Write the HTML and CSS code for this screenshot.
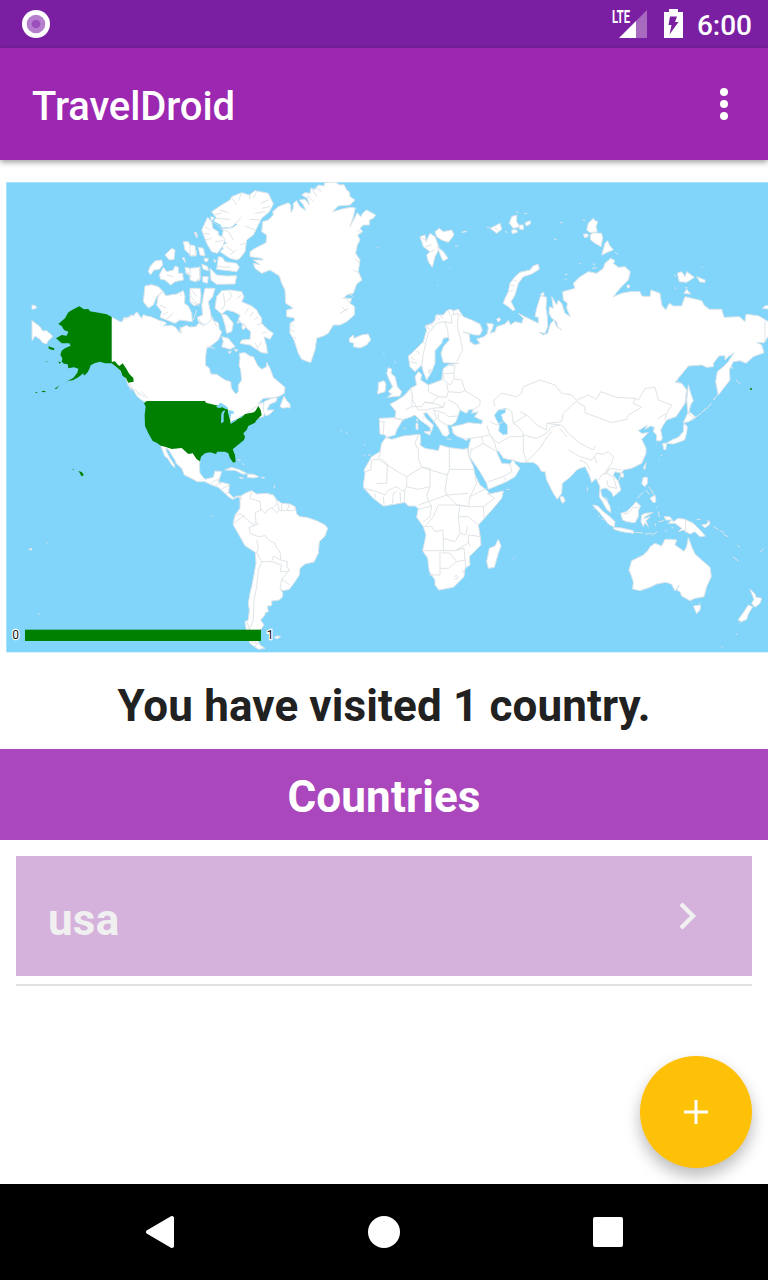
FILE: index.html
```html
<!DOCTYPE html>
<html lang="en">
<head>
<meta charset="utf-8">
<title>TravelDroid</title>
<link rel="stylesheet" href="styles.css">
</head>
<body>
<div class="screen">
  <div class="status">
    <svg class="status-dot" width="28" height="28" viewBox="0 0 28 28"><circle cx="14" cy="14" r="14" fill="#fff"/><circle cx="14" cy="14" r="9.3" fill="#b57fce"/><circle cx="14" cy="14" r="4.3" fill="#9c4fbb"/></svg>
    <div class="status-right">
      <svg width="36" height="32" viewBox="0 0 36 32"><path d="M35 2V30H24V13Z" fill="#a76abf"/><path d="M24 13V30H7Z" fill="#fff"/><text class="lte" x="0" y="14.500" textLength="18" lengthAdjust="spacingAndGlyphs">LTE</text></svg>
      <svg class="battery" width="19" height="29" viewBox="0 0 19 29"><path d="M5 0H14V3H19V29H0V3H5Z" fill="#fff"/><path d="M6 7.5H13L11 13H14.500L5.500 25.500L7.500 16H4.500Z" fill="#7b1fa2"/></svg>
      <span class="clock">6:00</span>
    </div>
  </div>
  <header class="appbar">
    <h1 class="title">TravelDroid</h1>
    <svg width="8" height="32" viewBox="0 0 8 32" fill="#fff"><circle cx="4" cy="4" r="4"/><circle cx="4" cy="16" r="4"/><circle cx="4" cy="28" r="4"/></svg>
  </header>
  <main class="content">
    <svg class="map" width="768" height="471" viewBox="0 546 2304 1413">
      <rect x="19" y="547" width="2290" height="1410" fill="#81d4fa"/>
      <g class="land">
        <!-- North America -->
        <g transform="translate(0 540)">
          <path d="M96 422L120 440 128 453 140 452 158 468 150 478 143 484 140 492 128 488 120 478 105 468 96 482ZM96 375L106 377 110 383 100 388 96 387Z"/>
          <path d="M335 411L360 425 366 426 372 412 385 413 395 405 403 407 405 400 412 397 417 405 425 415 430 404 440 408 452 410 480 422 492 425 500 430 490 438 515 436 527 442 540 460 540 445 560 436 568 441 588 440 595 430 612 435 616 415 630 410 638 412 640 422 655 428 658 448 665 455 660 470 655 480 630 500 620 505 617 530 616 555 628 565 632 582 650 583 675 600 692 605 694 625 707 642 715 635 715 615 725 600 722 570 717 555 720 535 718 520 735 518 750 528 760 530 772 555 785 568 800 560 800 547 810 565 820 592 835 605 855 622 853 640 840 648 820 653 790 655 775 670 790 668 798 690 790 710 755 720 690 740 610 730 440 665 438 668 425 660 412 650 400 630 385 618 380 600 360 570 335 548Z"/>
          <path d="M435 318L455 314 475 320 490 335 470 350 460 375 445 384 430 365ZM470 375L475 345 490 335 497 347 530 342 550 332 555 350 553 370 565 378 575 400 577 425 555 422 540 420 525 430 500 420 480 412 485 395ZM445 275L450 260 465 243 485 240 488 255 478 268 462 270 452 284ZM478 285L490 262 500 275 520 270 525 258 535 262 535 280 548 280 550 300 525 305 512 315 495 300 482 298ZM495 225L515 205 525 210 522 238 508 240ZM550 185L565 185 570 195 580 200 590 215 588 228 575 228 555 210ZM583 158L590 158 592 172 587 168ZM547 235L552 232 557 248ZM555 262L570 265 575 272 600 260 600 300 585 305 575 290 558 280Z"/>
        </g>
        <g transform="translate(570 540)">
          <path d="M65 95L95 75 120 60 125 50 155 38 178 45 195 32 235 40 250 72 238 95 215 115 200 145 190 165 170 180 165 215 150 235 140 240 120 235 90 215 100 205 95 195 110 190 95 175 100 150 92 145 85 135 65 125 62 110 75 108Z"/>
          <path d="M53 112L65 125 68 145 85 155 85 165 105 175 100 195 82 220 65 215 50 190 35 150 42 135ZM0 195L15 198 18 225 0 228ZM25 202L40 205 45 228 30 225ZM15 157L20 162 20 173ZM70 240L77 240 75 248ZM85 230L97 232 105 245 140 250 148 262 140 275 80 268 82 255ZM35 252L53 260 55 272 40 268ZM0 265L28 262 30 295 15 305 0 300ZM38 290L55 290 52 310 38 305ZM60 265L80 285 110 288 140 287 135 312 80 313 63 300ZM42 235L55 235 52 245 45 245ZM0 325L30 325 33 345 30 370 12 378 0 365ZM45 325L75 325 68 350 55 365 62 400 65 420 45 435 25 425 22 412 38 405 35 375Z"/>
          <path d="M75 385L80 350 95 332 120 330 155 335 162 350 155 365 185 378 200 390 205 400 215 415 215 430 235 450 250 460 240 478 222 470 230 500 232 520 215 518 195 505 180 495 150 490 155 480 180 478 182 455 165 440 145 420 150 405 130 395 110 390 95 402ZM95 402L110 405 130 430 125 455 110 460 105 435ZM95 470L115 475 135 500 120 508 95 500 100 485ZM155 440L160 430 168 440 160 450ZM142 425L150 420 145 432ZM115 515L125 515 118 521ZM132 508L142 508 140 516Z"/>
          <path d="M180 215L195 205 228 188 230 165 215 155 218 125 235 120 250 105 248 95 265 80 295 68 302 75 303 98 310 85 310 70 320 62 330 80 348 92 340 75 328 60 345 58 358 75 352 55 335 45 345 38 360 40 362 25 375 28 385 15 402 18 405 8 435 6 450 15 462 14 470 30 478 35 480 50 495 60 480 75 445 78 428 95 460 86 482 82 496 84 490 110 480 140 502 98 512 110 518 100 530 90 557 105 550 115 538 120 538 135 520 135 510 145 518 155 503 165 510 180 502 195 497 220 510 240 505 275 516 300 500 312 490 340 470 345 460 355 485 355 480 370 494 380 493 405 470 425 450 435 430 435 415 460 400 468 380 475 375 510 362 548 335 538 325 520 312 480 300 460 300 430 315 420 310 413 290 410 290 390 310 385 300 378 287 370 285 330 275 310 268 288 240 270 215 280 195 265 190 250 210 254 190 240 220 240 215 235 180 230Z"/>
          <path d="M478 475L490 465 492 475 515 465 535 462 542 480 530 495 510 504 490 500 492 490 478 486Z"/>
          <path d="M222 665L245 655 262 652 258 665 240 672 230 690 240 690 252 690 240 702 228 708 220 695ZM270 680L282 648 290 662 300 672 300 684 290 682 280 685Z"/>
        </g>
        <!-- Mexico, Central and South America -->
        <g transform="translate(570 1170)">
          <path d="M-88 167L-75 200 -67 205 -55 225 -45 233 -48 222 -60 205 -70 185 -73 175 -65 178 -55 195 -45 210 -42 220 -25 235 -17 255 0 263 22 275 45 275 65 285 85 292 103 308 115 320 128 328 145 320 152 328 160 325 155 318 142 318 130 323 116 308 118 283 100 278 85 276 90 260 95 245 75 243 70 262 45 268 30 250 28 230 30 205 -20 165Z"/>
          <path d="M150 320L165 310 185 302 200 312 230 310 250 315 260 330 275 340 300 342 315 350 320 372 330 380 350 382 380 392 405 405 413 415 405 438 388 455 385 490 372 516 345 522 330 535 328 555 315 575 298 598 280 602 272 598 278 608 278 620 268 630 245 633 245 647 232 648 235 665 225 668 225 675 212 690 222 705 215 715 205 730 200 745 210 765 225 775 205 778 180 760 172 740 165 695 175 690 178 660 175 640 180 610 185 590 192 555 198 520 196 487 165 467 150 440 130 405 130 398 135 375 150 355 150 330Z"/>
          <path d="M105 240L125 232 150 240 170 250 160 253 135 241ZM172 252L190 253 207 260 190 264 172 262ZM148 262L160 264 150 265ZM215 262h8v2h-8ZM252 742L262 738 272 740 262 746ZM143 210L152 210M157 220L163 226M65 377l5 2M452 122l4 1M468 128l4 1M522 165l4 1M535 195l6 2M253 285v10"/>
        </g>
        <g transform="translate(0 1170)"><path d="M87 478l8 -3 1 4 -8 1ZM139 457l4 3M114 671l5 1"/></g>
        <!-- Europe and Asia -->
        <g transform="translate(1140 540)">
          <path d="M90 560L85 528 95 520 110 505 130 485 140 450 135 438 155 430 165 420 168 405 190 405 200 392 210 388 220 392 235 388 243 400 250 410 275 420 300 432 307 450 300 465 285 465 250 455 268 463 270 485 285 495 300 490 290 477 312 470 322 460 325 443 320 430 340 432 338 445 330 460 345 455 350 440 375 432 385 421 392 435 405 425 425 430 430 415 415 400 430 408 455 420 475 430 475 412 465 410 470 385 482 347 500 352 498 385 502 410 503 440 495 460 478 457 490 465 503 460 512 430 522 420 530 440 545 450 533 440 530 425 515 415 507 400 508 380 520 385 515 350 530 375 535 360 545 370 555 400 571 410 560 385 562 370 550 360 548 335 585 325 580 310 598 292 625 275 650 280 670 265 675 250 692 235 705 242 700 250 715 262 735 260 751 275 745 300 720 325 700 350 725 340 750 335 780 335 785 348 810 350 813 330 840 340 845 375 857 390 868 370 880 378 905 378 915 350 965 362 972 375 988 388 1025 388 1032 412 1078 410 1095 425 1098 403 1135 407 1170 428 1170 460 1153 488 1130 488 1145 495 1152 518 1120 530 1098 550 1080 542 1060 545 1048 570 1050 600 1015 645 1007 605 1012 575 1030 560 1045 545 1062 518 1045 530 1035 540 1035 527 1017 528 1000 550 1000 560 980 562 965 555 925 558 885 607 905 610 920 630 915 670 888 710 860 720 850 735 842 750 847 775 842 783 830 782 830 765 820 755 823 742 812 738 795 748 802 735 775 752 785 760 805 758 785 778 798 805 798 820 785 850 755 865 730 870 725 880 705 875 700 885 715 905 723 930 700 950 695 938 680 925 670 925 662 930 665 948 680 960 690 980 692 998 680 988 670 970 658 950 660 920 648 895 635 908 628 885 615 860 600 865 590 870 570 892 547 910 545 940 532 958 520 940 500 900 495 875 485 875 475 858 460 847 420 847 395 840 370 835 355 812 350 815 365 850 390 852 400 838 405 850 420 865 405 890 380 905 325 928 320 910 300 875 270 832 265 822 265 805 273 775 255 778 230 768 220 760 215 740 240 735 265 728 305 732 308 722 283 710 295 695 275 700 280 688 265 690 260 700 240 690 228 725 215 735 202 735 208 760 200 770 188 765 180 750 165 728 140 698 130 700 138 715 160 735 158 745 152 758 150 742 120 720 105 705 90 712 70 718 65 725 50 750 45 765 20 772 15 765 0 762 -2 715 45 713 48 695 30 672 45 665 65 652 75 645 92 625 110 615 105 590 115 575 125 583 122 600 145 615 185 600 190 565 205 555 235 550 190 548 183 520 190 500 208 480 205 472 190 475 185 490 165 512 165 550 155 575 140 600 130 575 125 555 105 575Z"/>
          <path d="M20 580L25 563 35 567 33 580 45 590 52 620 65 635 60 648 22 652 35 642 25 635 38 620 28 600ZM-5 608L12 602 18 612 15 635 -8 642 -5 625ZM145 572L153 568 148 582ZM45 545v5M10 520l4 3M-10 205l5 -4M171 315l3 2"/>
          <path d="M120 170L135 165 138 185 150 160 165 170 178 205 165 230 157 262 145 245 140 225 150 215 130 200ZM165 155L178 145 190 155 215 150 222 165 205 187 185 180 170 170ZM172 200L190 215 204 235 190 243 183 230ZM330 145L345 138 360 130 365 148 350 160 340 152ZM388 130L395 110 410 105 410 125 420 140 400 145ZM395 150l15 -1 2 8 -15 4ZM418 135l12 0 0 14 -12 -2ZM435 128l16 -6 0 10 -12 6ZM408 95l8 3M432 100l10 1M375 155l8 2M320 142l8 1M245 157l12 -4 3 2ZM225 198l10 0M540 128l8 0M522 177l8 2M208 264l3 2M555 283l8 0M555 298l5 1"/>
          <path d="M475 253L478 268 455 282 430 290 415 310 405 345 393 365 405 388 400 393 385 380 370 370 375 355 385 335 390 310 405 290 420 277 450 270 460 257ZM350 417l8 -4 4 7 -8 6ZM482 342l8 -5 3 8 -8 2Z"/>
        </g>
        <g transform="translate(1710 540)">
          <path d="M50 150L55 130 70 115 75 122 83 125 78 140 82 155 60 158ZM60 165L70 158 95 160 98 175 93 200 75 190 62 180ZM40 162l14 0 0 8 -10 3ZM95 225L105 190 113 182 118 195 130 210 112 217ZM135 217l8 5M38 119l7 2M28 250l5 2M68 252l8 1M66 265l14 -2M322 280L335 275 345 290 350 275 373 292 350 307 328 305ZM380 290L405 300 405 307 390 306ZM342 340L350 328 362 342ZM312 285l5 5M395 262l4 -2M313 323l5 4M345 323l8 1M578 385L584 378 600 376 600 388ZM498 602l6 3M505 608l6 3M435 655l-5 6M415 683l-5 3M405 690l-10 6"/>
          <path d="M355 615L362 640 370 662 363 672 358 690 355 710 350 660ZM350 715L358 695 378 712 365 720 345 728ZM170 318l6 -4 4 6 -6 5ZM320 600l8 10M483 562l8 3"/>
        </g>
        <g transform="translate(1680 1170)">
          <path d="M370 98L383 70 403 84 385 95ZM372 100L382 110 380 128 374 150 352 158 340 162 318 160 340 148 355 142 370 125ZM308 160l12 0 -3 20 -6 -2ZM250 235L258 218 255 238ZM182 250l8 0 0 12 -9 -2ZM250 262L262 262 262 280 255 290 245 282ZM270 325L285 315 288 335 280 338ZM265 290l12 14M258 300l10 14M275 300l5 14M232 325L250 305M82 292v12M0 320L15 330 8 340 0 325"/>
          <path d="M98 345L112 347 130 365 150 380 165 395 163 412 145 402 120 370ZM160 412L185 414 220 422 222 430 185 425 162 418ZM182 370L200 365 220 345 228 335 242 348 235 362 235 380 225 398 200 395 188 390ZM245 375L255 370 278 368 255 380 250 387 270 380 258 392 265 410 255 398 250 410 243 395ZM312 380L330 380 340 395 355 385 375 388 400 400 410 410 425 425 436 438 420 440 405 425 390 432 370 420 355 425 365 415 345 400 325 400 335 390 318 390ZM425 405L440 402 448 392 450 402 435 414ZM295 365l3 16M295 395l18 -3M225 427l25 2M255 432l20 -2M275 436L292 426M410 388l12 0M440 390l5 6M460 410l14 8M478 420l14 8M490 432l14 8M533 465l6 8M518 500l18 14M600 488l10 -12M100 355l4 3M115 375l4 5M125 385l5 6M315 420l5 4M335 410l4 5M288 350l2 4M175 351l3 1M285 400l2 8"/>
          <path d="M207 540L215 512 250 495 265 480 270 470 285 460 305 468 315 448 330 448 350 450 345 465 372 484 380 470 385 443 395 470 405 492 425 510 450 532 454 560 440 590 432 620 405 625 390 632 365 618 360 605 350 600 358 585 345 603 335 583 318 577 290 582 270 592 240 602 218 597 220 575 215 560ZM400 648L422 645 420 660 410 671ZM394 638l3 1M418 638l2 4M570 598L585 612 588 622 605 625 600 640 585 652 575 640 582 628ZM565 645L578 650 565 672 560 688 545 695 534 690 550 668ZM538 698l4 1M528 733l4 1M484 771l4 1M303 197l4 -2M295 211l3 1M288 161l2 1M405 83L425 68M430 62l8 -8M442 52L455 40M460 30L475 12"/>
        </g>
        <!-- Africa -->
        <g transform="translate(1080 1140)">
          <path d="M78 172L95 178 130 168 180 163 182 180 180 195 195 205 235 212 240 195 268 203 310 208 323 205 325 225 340 260 345 285 360 315 385 335 387 342 430 333 425 355 400 385 355 435 360 465 363 495 328 530 330 555 315 565 312 590 280 622 237 630 225 615 225 600 208 575 203 535 188 512 198 465 190 440 170 412 175 385 165 378 145 378 135 367 120 370 70 378 40 355 12 325 10 315 15 280 12 270 35 230 60 215 65 190ZM415 478L423 498 415 520 403 562 385 565 380 545 388 505 405 498ZM602 350l8 0 5 12 -6 8 -6 -8ZM192 155l20 -1 -2 11 -12 -5ZM168 130l6 0 0 18 -6 0ZM168 118l4 0 0 8M130 145l8 -1M260 177l14 1M312 178l14 -3 -6 7ZM440 328l10 1M455 535l3 2M465 530l3 -1M12 228l4 -2M28 225l3 -2"/>
        </g>
      </g>
      <!-- Inland water -->
      <path class="water" transform="translate(1080 1140)" d="M403 105L415 90 438 84 436 98 424 104 430 122 442 135 443 162 430 165 416 153 418 135 408 118Z"/>
      <path class="channel" transform="translate(570 540)" d="M64 107L76 112 68 124 90 136 95 145 125 142 140 132"/>
      <!-- Fjords and inlets -->
      <g class="border" transform="translate(570 540)">
        <path d="M70 105L95 100M75 115L120 118M90 90L115 98M125 52L140 75M155 40L145 62M178 45L180 58M200 35L190 55M235 60L212 70M240 80L215 85M225 95L195 100M210 120L180 118M195 150L165 138M95 145L125 142 155 110M100 150L115 155 130 180M150 195L165 190M45 140L62 150M40 160L60 162M45 180L65 175M75 185L100 182M110 200L130 215M120 225L138 210M80 260L120 262M100 340L105 375 95 390M120 335L125 350 110 365M155 345L140 355M175 385L165 400M190 395L180 410M205 410L192 420M215 430L200 435M230 455L218 460M215 485L205 500M195 488L205 508M450 400L475 385M455 380L470 395M465 350L480 370M475 340L490 350M495 235L508 250M490 270L510 280M500 150L515 160M365 25L380 50M375 20L395 35M350 45L370 65M300 430L312 440M302 450L315 455M310 470L318 475M50 500L75 505M65 410L80 440M25 415L40 440M215 668L170 700M455 380"/>
      </g>
      <g class="border" transform="translate(0 540)"><path d="M495 420L520 400M490 405L505 395M480 375L500 385M540 335L545 350M575 330L590 350M568 345L600 380M575 365L590 375M590 390L580 420M385 608l8 25M390 612l12 18M405 628l14 20M415 638l22 15M425 635l20 20M395 405L370 420M540 440L545 460M500 285L520 290M560 275L575 290"/></g>
      <g class="border" transform="translate(1140 540)"><path d="M90 530L105 540M92 545L112 550M110 510L118 522M130 488L138 495M138 440L150 448M150 432L160 440M170 410L180 420M178 405L190 415M205 392L210 405M220 392L222 405M140 440L165 425M125 175L140 180M135 200L155 195M150 215L165 210M388 335L400 330M392 315L405 318M400 300L410 305M345 145L355 150"/></g>
      <!-- Country borders -->
      <g class="border">
        <path transform="translate(570 1170)" d="M60 285L75 270 85 270 90 262M75 290L85 280 95 282M92 298L118 285M105 310L118 308M150 318L155 330M185 305L180 325 210 335 213 360 195 368 198 395 190 405 150 370 135 378M130 400L165 375M198 395L205 402 178 412 180 430 205 440 225 437 235 450 255 460 258 470 272 490 272 510 250 498 245 515 215 515 200 487 205 475 200 450M210 355L225 370 232 360 250 352 262 340 258 330M262 340L268 362 310 362 318 350M275 342L275 360M298 342L292 360M268 362L260 368 245 355M245 515L275 525 270 545 290 545 298 540 290 530 292 515 272 510M298 540L275 568 300 585M275 568L270 598M215 515L205 540 200 590 192 630 190 690 178 720 200 745M180 735L200 760 195 772M182 755L205 762M170 690L178 720"/>
        <path transform="translate(1140 540)" d="M125 560L130 520 145 460 170 430 195 425 203 450 205 472M195 425L215 430 215 405 235 400 243 410M235 400L232 440 240 470 248 510 230 545M205 555L225 558 222 580 190 580M190 580L190 600 210 615 222 597 222 580M222 597L245 600 255 632 240 638 205 635 200 612M145 615L145 635 175 650 200 652 205 635M92 625L98 650 95 680 125 680 135 665 155 670 175 650M98 620L70 650M95 655L115 690 140 690 155 685 190 682 195 665M190 682L165 670 135 668M255 632L300 660 300 675 280 690M205 660L230 672 240 690M160 690L170 715 160 725M160 690L195 700 205 710 235 708M175 700L175 720 200 735M45 713L75 720M75 690L95 680M345 680L340 662 365 640 410 650 425 640 430 620 480 600 525 615 545 640 575 645 590 662M365 690L380 685 395 695 400 730 440 705 420 695M440 705L470 735 500 750 500 730 545 725 550 700 590 662 590 660 625 645 650 658 662 635 710 652 765 655 760 670 785 682 745 705 740 718 695 728 615 698 615 680 590 665M330 725L350 735 370 725M320 735L330 765 355 790 390 770 425 770 430 760 415 740 400 730M430 765L430 815 440 845M430 765L470 775 500 760 515 740 540 735 500 730M440 845L480 805 495 780 515 755M540 735L550 740 565 760 600 790 640 810 645 800M540 745L560 770M270 775L305 770 330 765M305 770L310 790 275 810M310 790L345 812M330 765L345 790 350 815M275 805L270 825M325 905L370 890 380 900M390 852L395 875 370 890M565 810L600 830 635 840M635 840L650 820 670 822 685 815 700 830 695 850 670 885 690 865 725 870M600 840L620 850 630 870M645 830L650 850M690 865L680 880 665 885 655 900M680 880L700 890 710 925 685 920 680 900M725 875L715 905M685 960L675 950"/>
        <path transform="translate(1710 540)" d="M585 422V485M195 655L205 660 225 625 255 622 265 660 305 675 290 700 285 718M265 715L290 700"/>
        <path transform="translate(1080 1140)" d="M62 215L55 238 105 270 140 290 185 262 175 235 175 210 165 190 175 165M55 238L35 240 32 270 15 275M62 235L82 252 80 310 50 310M185 262L262 285 268 268V203M268 268H340M185 262L210 265 210 320 200 345 205 365 175 375M210 320L175 328 140 320 140 290M140 320L130 335 110 320 85 330 75 345 50 335 12 325M110 335L100 340 98 370M120 335L122 368M135 330L132 365M70 350L72 375M45 340L45 355M262 285L255 330 260 345 205 365 215 378 175 388M260 345L290 375 325 380 330 350 350 310 345 290M260 345L325 340M330 350L380 325M325 380L370 380 405 355 380 340M370 380L372 415M325 380L300 375 295 410 325 410 355 435M215 378L210 410 190 425M235 375L220 410 195 440M235 375L300 375M190 440L215 440 225 455 248 450 250 475 285 485 300 460 295 410M300 460L318 465 322 440M250 475V512L188 512M250 512L285 512 325 490 325 465 363 470M240 515V585L208 585M245 518L270 520 290 545 315 540 312 505 285 512M290 545L265 565 240 565M315 540L318 565M330 500L325 480M283 590L290 586 294 595 286 599 282 594M305 570l6 4 -4 5M103 115L125 120M72 125L70 165M60 125L75 126"/>
        <path transform="translate(1680 1170)" d="M377 390V430M190 372L205 370 220 352 238 352"/>
      </g>
      <!-- Visited country -->
      <g fill="green">
        <path transform="translate(0 540)" d="M175 432L195 415 205 397 220 388 238 379 252 388 265 387 270 394 300 399 320 403 335 411 335 546 345 544 352 553 358 558 368 550 378 565 388 582 400 594 401 605 385 608 378 595 368 588 362 572 350 562 335 550 315 550 300 545 285 549 272 556 268 567 262 578 252 587 250 580 235 592 220 600 205 603 192 612 208 600 220 594 232 578 235 566 222 562 205 565 203 553 192 551 185 545 187 535 181 525 185 512 195 505 212 497 208 490 185 490 168 475 185 465 200 467 205 455 192 450 185 438ZM145 499L163 505 162 511 147 507ZM175 545l8 1 -4 6ZM137 543l6 2 -2 2ZM163 627l16 -11 -10 11ZM105 636l8 1 -4 3ZM124 634l7 -2 8 3 -10 2ZM2250 625h6v4h-6Z"/>
        <path transform="translate(570 1170)" d="M-130 33L-138 40 -133 50 -136 75 -135 108 -125 130 -112 153 -100 158 -88 167 -75 170 -55 177 -25 174 -5 192 8 190 20 208 30 214 33 200 45 190 60 187 78 192 82 185 105 185 115 190 120 205 130 218 137 215 135 195 128 178 140 168 162 150 165 140 160 130 170 120 175 108 195 98 198 92 215 75 212 60 205 48 198 60 192 67 165 72 155 82 140 88 122 97 112 55 92 48 75 45 48 38 45 33ZM-352 237l4 1 -3 3ZM-335 243L-325 246 -318 255 -326 259 -330 250Z"/>
      </g>
      <path transform="translate(570 1170)" fill="#81d4fa" d="M78 51L92 38 108 48 115 55 108 58 97 52 88 54ZM93 100L94 72 98 64 106 61 101 72 101 95ZM114 60L130 63 132 73 124 70 121 88 116 75ZM119 98L145 84 140 91 123 101ZM145 82L160 75 153 83Z"/>
      <rect x="75" y="1889" width="708" height="34" fill="green"/>
      <g class="legend"><text x="37" y="1918">0</text><text x="800" y="1918">1</text></g>
    </svg>
    <p class="summary">You have visited 1 country.</p>
    <h2 class="section">Countries</h2>
    <div class="list">
      <div class="item">
        <span class="item-name">usa</span>
        <svg width="18" height="28" viewBox="0 0 18 28" fill="none" stroke="#f0f0f0" stroke-width="4.400"><path d="M2 2L14 14L2 26"/></svg>
      </div>
    </div>
    <button class="fab" aria-label="Add"><svg width="24" height="24" viewBox="0 0 24 24" stroke="#fff" stroke-width="3"><path d="M12 0V24M0 12H24"/></svg></button>
  </main>
  <nav class="navbar">
    <svg width="32" height="34" viewBox="0 0 32 34"><path d="M28 3V31L4 17Z" fill="#fff" stroke="#fff" stroke-width="4" stroke-linejoin="round"/></svg>
    <svg width="32" height="32" viewBox="0 0 32 32"><circle cx="16" cy="16" r="16" fill="#fff"/></svg>
    <svg width="32" height="32" viewBox="0 0 32 32"><rect x="1" y="1" width="30" height="30" rx="2" fill="#fff"/></svg>
  </nav>
</div>
</body>
</html>
```
FILE: styles.css
```css
* { box-sizing: border-box; }
body { margin: 0; font-family: Roboto, sans-serif; background: #fff; }
svg { display: block; flex: none; }
.screen { width: 768px; height: 1280px; display: flex; flex-direction: column; overflow: hidden; }
.status { height: 48px; background: #7b1fa2; display: flex; justify-content: space-between; padding: 0 16px 0 22px; }
.status-dot { margin-top: 10px; }
.status-right { display: flex; align-items: flex-start; padding-top: 8px; }
.battery { margin: 1px 14px 0 16px; }
.lte { font: 700 17.500px Roboto, sans-serif; fill: #fff; }
.clock { color: #fff; font-size: 28px; font-weight: 500; line-height: 36px; }
.appbar { height: 112px; background: #9c27b0; display: flex; align-items: center; justify-content: space-between; padding: 0 40px 0 32px; box-shadow: 0 2px 6px rgba(0,0,0,.4); z-index: 1; }
.title { margin: 6px 0 0; color: #fff; font-size: 40px; font-weight: 500; line-height: 48px; letter-spacing: -.1px; }
.content { position: relative; flex: 1; padding-top: 22px; display: flex; flex-direction: column; }
.land { fill: #fff; stroke: #dde5e9; stroke-width: 3; stroke-linejoin: round; }
.water { fill: #81d4fa; stroke: #dde5e9; stroke-width: 2; }
.channel { fill: none; stroke: #81d4fa; stroke-width: 4; }
.border { fill: none; stroke: #dfe4e7; stroke-width: 3; stroke-linejoin: round; }
.legend { font: 36px Roboto, sans-serif; fill: #111; stroke: #fff; stroke-width: 7; paint-order: stroke; }
.summary { margin: 0; height: 96px; padding-top: 27px; text-align: center; font-size: 44px; font-weight: 700; line-height: 52px; letter-spacing: .13px; color: #212121; }
.section { margin: 0; height: 91px; padding-top: 22px; background: #ab47bc; color: #fff; text-align: center; font-size: 44px; font-weight: 700; line-height: 52px; letter-spacing: .13px; }
.list { margin: 16px 16px 0; height: 130px; border-bottom: 2px solid #e0e0e0; }
.item { height: 120px; padding: 0 55px 0 32px; background: #d5b2db; display: flex; align-items: center; justify-content: space-between; }
.item-name { font-size: 44px; font-weight: 700; color: #f0f0f0; line-height: 52px; letter-spacing: .2px; margin-top: 8px; }
.fab { position: absolute; right: 16px; bottom: 16px; width: 112px; height: 112px; padding: 0; border: 0; border-radius: 50%; background: #ffc107; display: flex; align-items: center; justify-content: center; box-shadow: 0 8px 16px rgba(0,0,0,.27); }
.navbar { height: 96px; background: #000; display: flex; align-items: center; justify-content: space-between; padding: 0 144px; position: relative; }
```
